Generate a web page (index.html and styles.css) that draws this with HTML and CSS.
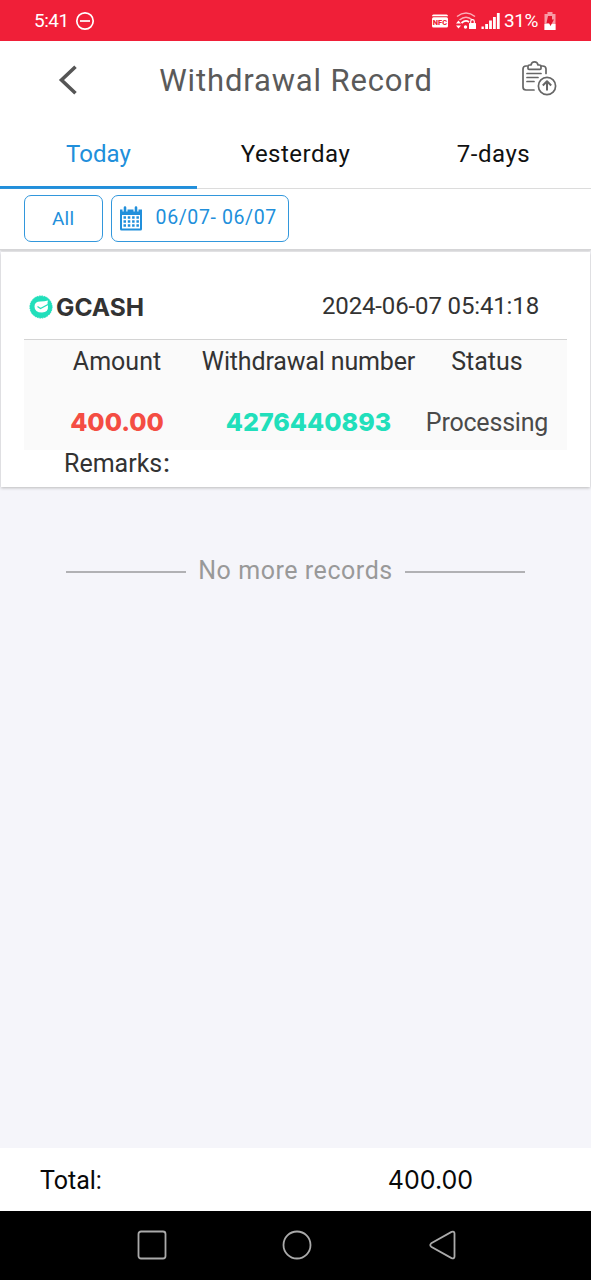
FILE: index.html
```html
<!DOCTYPE html>
<html lang="en">
<head>
<meta charset="utf-8">
<title>Withdrawal Record</title>
<link rel="stylesheet" href="styles.css">
</head>
<body>
<div class="app">
  <div class="status-bar">
    <span class="clock">5:41</span>
    <svg class="dnd" width="20" height="20" viewBox="0 0 20 20" fill="none" stroke="currentColor" stroke-width="1.7"><circle cx="10" cy="10" r="8.2"/><path d="M5 10h10"/></svg>
    <div class="status-icons">
      <svg width="18" height="16" viewBox="0 0 18 16"><path d="M1 3.200Q1 1.500 2.500 1.500h13Q17 1.500 17 3.200z" fill="#fff"/><rect x="1" y="4.200" width="16" height="10.300" rx="1.500" fill="#fff"/><text x="9" y="12" text-anchor="middle" class="nfc">NFC</text></svg>
      <svg width="22" height="20" viewBox="0 0 22 20" fill="none" stroke="#fff"><path d="M2 5.500Q11-1.500 20 5.500M4.500 9Q11 3.500 17.500 9" stroke-width="1.500" opacity=".65"/><path d="M6.500 12Q10.500 8.500 14 11" stroke-width="1.700"/><circle cx="10.500" cy="16" r="1.700" fill="#fff" stroke="none"/><path d="M1 12.500l2.500-3 2.500 3zM1 14.500l2.500 3 2.500-3z" fill="#fff" stroke="none"/><rect x="14" y="12" width="7" height="6" rx=".6" fill="#fff" stroke="none"/><path d="M15.700 12v-1.500a1.800 1.800 0 0 1 3.600 0V12" stroke-width="1.200"/></svg>
      <svg width="19" height="18" viewBox="0 0 19 18" fill="#fff"><path d="M.5 14.500h2.300V17H.5zM4.200 12h2.800v5H4.200zM8.100 8.500h2.800V17H8.100zM12 5h2.800v12H12zM15.900 1h2.800v16h-2.800z"/></svg>
      <span class="percent">31%</span>
      <svg width="14" height="20" viewBox="0 0 14 20"><path d="M4.500 1h5v2h3v16h-11V3h3z" fill="#fff" opacity=".55"/><path d="M1.500 13h11v6h-11z" fill="#fff"/><path d="M5 5h4v3.500h2L7.500 15 6 12H3.500z" fill="#e3142d"/></svg>
    </div>
  </div>

  <header class="header">
    <svg class="back" width="20" height="32" viewBox="0 0 20 32" fill="none" stroke="#555" stroke-width="3.600"><path d="M17.500 2.800L3.500 16l14 13.200"/></svg>
    <h1 class="title">Withdrawal Record</h1>
    <svg class="record" width="38" height="38" viewBox="0 0 38 38" fill="none" stroke="#666" stroke-width="1.700" stroke-linecap="round" stroke-linejoin="round"><path d="M7 6H6Q3 6 3 9v18q0 3 3 3h8M21 6h1.500Q26 6 26 9v4.500"/><path d="M8 8.500V6.200q0-1.200 1.500-1.200H11q.5-3.200 3.500-3.200T18 5h1.500Q21 5 21 6.200v2.300q0 .8-1 .8H9q-1 0-1-.8z"/><path d="M7 13.500h14M7 17.500h11M7 21.500h7"/><circle cx="27" cy="26" r="8.600"/><path d="M27 30.500V21.500M22.800 25.500l4.200-4.200 4.200 4.200" stroke-width="2" stroke-linecap="butt"/></svg>
  </header>

  <nav class="tabs">
    <div class="tab tab-active"><span>Today</span></div>
    <div class="tab"><span class="tab-yesterday">Yesterday</span></div>
    <div class="tab"><span class="tab-week">7-days</span></div>
  </nav>

  <div class="filters">
    <div class="filter filter-all">All</div>
    <div class="filter filter-date">
      <svg width="24" height="26" viewBox="0 0 24 26" fill="none"><path d="M1 3.500h22V23a1.500 1.500 0 0 1-1.500 1.500h-19A1.500 1.500 0 0 1 1 23z" fill="#218fdb"/><path d="M3 9h18v13.500H3z" fill="#fff"/><path d="M6 1.500v4M17 1.500v4" stroke="#fff" stroke-width="5"/><path d="M6 1.500v4M17 1.500v4" stroke="#218fdb" stroke-width="2.600" stroke-linecap="round"/><path d="M4.500 11.500h15.500M4.500 15.500h15.500M4.500 19.500h15.500" stroke="#218fdb" stroke-width="2.300" stroke-dasharray="2.500 1.800"/></svg>
      <span>06/07- 06/07</span>
    </div>
  </div>

  <main class="content">
    <section class="card">
      <div class="card-head">
        <svg class="brand-icon" width="24" height="24" viewBox="0 0 24 24"><circle cx="12" cy="12" r="11.100" fill="#21dfbb" stroke="#21dfbb" stroke-dasharray="1.500 1"/><path d="M5.500 11.500Q5.500 6.500 11.500 6.500q4 0 7.500-1-1 2 0 5.500.5 6.500-6 6.500-7.500 0-7.500-6z" fill="#fff"/><path d="M8.500 11.500l3 2 7.500-4" fill="none" stroke="#21dfbb" stroke-width="1.300"/></svg>
        <strong class="brand">GCASH</strong>
        <time class="stamp">2024-06-07 05:41:18</time>
      </div>
      <div class="grid">
        <div class="label">Amount</div>
        <div class="label l-number">Withdrawal number</div>
        <div class="label">Status</div>
        <div class="value amount">400.00</div>
        <div class="value number">4276440893</div>
        <div class="value state">Processing</div>
      </div>
      <div class="remarks">Remarks<span class="colon">:</span></div>
    </section>
    <div class="end"><i class="rule"></i><span class="end-text">No more records</span><i class="rule"></i></div>
  </main>

  <footer class="total"><span class="total-label">Total:</span><span class="total-value">400.00</span></footer>

  <div class="navbar">
    <svg width="30" height="30" viewBox="0 0 30 30"><rect x="1.500" y="1.500" width="27" height="27" rx="2.500"/></svg>
    <svg class="home" width="30" height="30" viewBox="0 0 30 30"><circle cx="15" cy="15" r="13.500"/></svg>
    <svg width="30" height="30" viewBox="0 0 30 30"><path d="M3.200 13.300L23.500 1.900Q26.500 1 26.500 3.500v23q0 2.500-3 1.600L3.200 16.700Q1.300 15 3.200 13.300z"/></svg>
  </div>
</div>
</body>
</html>
```
FILE: styles.css
```css
* { box-sizing: border-box; }
body { margin: 0; font-family: Roboto, "Liberation Sans", sans-serif; color: #333; }
svg { display: block; flex: none; }
.app { width: 591px; height: 1280px; display: flex; flex-direction: column; background: #f5f5fa; overflow: hidden; white-space: nowrap; }

.status-bar { height: 41px; flex: none; background: #f01f38; color: #fff; display: flex; align-items: center; padding: 0 34px; font-size: 19px; }
.clock { width: 41px; letter-spacing: -.5px; }
.status-icons { margin-left: auto; display: flex; align-items: center; gap: 4px; }
.status-icons svg:first-child { margin-right: 2px; }
.nfc { font: 900 7.500px Roboto, sans-serif; fill: #f01f38; }
.percent { letter-spacing: -.4px; margin-right: 1px; }

.header { height: 79px; flex: none; background: #fff; display: flex; align-items: center; padding: 0 33px 0 58px; justify-content: space-between; }
.back { margin-top: -2px; }
.title { margin: 0 6px 0 0; font-size: 31px; font-weight: 400; color: #5a5a5a; letter-spacing: .85px; }
.record { margin-top: -4px; }

.tabs { height: 69px; flex: none; background: #fff; display: flex; border-bottom: 1px solid #ddd; color: #111; font-size: 24px; }
.tab { flex: 1; display: flex; align-items: center; justify-content: center; letter-spacing: .5px; }
.tab-active { color: #218fdb; border-bottom: 3px solid #218fdb; padding-top: 1px; letter-spacing: .1px; margin-bottom: -1px; }
.tab-week { margin-left: 2px; }

.filters { height: 61px; flex: none; background: #fff; display: flex; gap: 8px; padding: 6px 23px 7px; border-bottom: 1px solid #d5d5d7; box-shadow: 0 1px 2px #ccc; }
.filter { border: 1.500px solid #3297dc; border-radius: 7px; color: #218fdb; display: flex; align-items: center; font-size: 19.500px; letter-spacing: .6px; }
.filter-all { width: 79px; margin-left: .6px; justify-content: center; font-size: 19px; letter-spacing: .2px; }
.filter-date { width: 178px; padding-left: 7px; gap: 13px; }
.filter-date span { margin-top: -2px; }

.content { flex: 1; }
.card { height: 235px; margin: 2px 1px 0; background: #fff; box-shadow: 0 1px 3px #bbb; padding: 0 23px; }
.card-head { height: 87px; display: flex; align-items: center; padding: 22px 28px 0 5px; }
.brand { font: 700 24.500px Inter, sans-serif; margin-left: 3px; }
.stamp { margin-left: auto; font-size: 24px; letter-spacing: -.14px; margin-top: -1px; }
.grid { height: 111px; background: #fafafa; border-top: 1px solid #d4d4d4; display: grid; grid-template-columns: 186px 197px 160px; grid-template-rows: 43px 67px; justify-items: center; align-items: center; font-size: 25px; }
.l-number { letter-spacing: -.15px; }
.value { padding-top: 12px; }
.amount, .number { font-family: Inter, sans-serif; font-weight: 800; font-size: 25px; padding-top: 10px; }
.amount { color: #f44d43; }
.number { color: #21dfbb; }
.state { color: #4a4a4a; letter-spacing: -.2px; }
.remarks { padding: 0 0 0 40px; font-size: 25px; line-height: 28px; }
.colon { margin-left: 1px; font-weight: 500; }
.end { display: flex; justify-content: center; align-items: center; gap: 12px; margin-top: 69px; font-size: 25px; line-height: 30px; color: #999; }
.end-text { letter-spacing: .55px; }
.rule { width: 120px; height: 2px; background: #b1b1b4; margin-top: 2px; }

.total { height: 63px; flex: none; background: #fff; display: flex; align-items: center; justify-content: space-between; padding: 2px 118px 0 40px; font-size: 25px; color: #080808; }
.total-value { font-family: Inter, sans-serif; font-size: 25px; margin-top: -2px; }
.navbar { height: 69px; flex: none; background: #000; display: flex; align-items: center; justify-content: space-between; padding: 0 133px 2px 137px; fill: none; stroke: #aaa; stroke-width: 1.800; }
.home { margin-right: 2px; }
```
